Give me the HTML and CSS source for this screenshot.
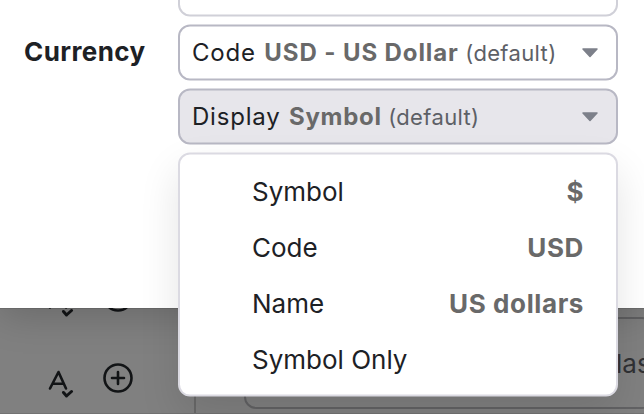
FILE: index.html
```
<!DOCTYPE html>
<html lang="en">
<head>
<meta charset="utf-8">
<title>Currency</title>
<link rel="stylesheet" href="styles.css">
</head>
<body>
<div class="page">
  <div class="tools">
    <svg class="spell" viewBox="0 0 26 28"><path d="M2 18.500L10.500 2L18 18.500M5 13.800H15"/><path class="check" d="M15.500 22.500L18.500 26L23.500 21.500"/></svg>
    <svg class="plus" viewBox="0 0 30 30"><circle cx="15" cy="15" r="13.500"/><path d="M15 9V21M9 15H21"/></svg>
  </div>
  <div class="tools">
    <svg class="spell" viewBox="0 0 26 28"><path d="M2 18.500L10.500 2L18 18.500M5 13.800H15"/><path class="check" d="M15.500 22.500L18.500 26L23.500 21.500"/></svg>
    <svg class="plus" viewBox="0 0 30 30"><circle cx="15" cy="15" r="13.500"/><path d="M15 9V21M9 15H21"/></svg>
  </div>
  <div class="pane"><div class="field"><span>las</span></div></div>
</div>
<main class="dialog">
  <div class="label">Currency</div>
  <div class="controls">
    <div class="select previous"></div>
    <div class="select"><span>Code</span><b class="long">USD - US Dollar</b><small>(default)</small><svg class="caret" viewBox="0 0 18 11"><path d="M2 1.500H16L9 9Z"/></svg></div>
    <div class="select active"><span>Display</span><b>Symbol</b><small>(default)</small><svg class="caret" viewBox="0 0 18 11"><path d="M2 1.500H16L9 9Z"/></svg></div>
  </div>
</main>
<div class="menu">
  <div class="item"><span>Symbol</span><b>$</b></div>
  <div class="item"><span>Code</span><b>USD</b></div>
  <div class="item"><span>Name</span><b>US dollars</b></div>
  <div class="item"><span>Symbol Only</span></div>
</div>
</body>
</html>
```
FILE: styles.css
```
* { box-sizing: border-box; }
body {
  margin: 0;
  width: 644px;
  height: 414px;
  overflow: hidden;
  position: relative;
  background: #808080;
  color: #1d2125;
  font: 26px/32px Inter, sans-serif;
}
.page {
  position: absolute;
  inset: 0;
  padding-top: 282px;
  overflow: hidden;
  border-bottom: 1px solid #727272;
}
.tools {
  display: flex;
  gap: 29px;
  height: 81px;
  padding-left: 48px;
}
.tools svg {
  fill: none;
  stroke: #121416;
  stroke-width: 2.600;
  stroke-linecap: round;
  stroke-linejoin: round;
}
.tools .check { stroke-width: 3; }
.spell { width: 26px; height: 28px; margin-top: 7px; }
.plus { width: 30px; height: 30px; }
.pane {
  position: absolute;
  left: 194px;
  top: 300px;
  width: 460px;
  height: 114px;
  padding: 17px 0 0 48px;
  border-left: 2px solid #696969;
}
.field {
  height: 92px;
  border: 2px solid #626264;
  border-radius: 12px;
  display: flex;
  align-items: center;
  padding: 2px 0 0 370px;
  color: #303134;
}
.dialog {
  position: absolute;
  left: 0;
  top: 0;
  width: 644px;
  height: 308px;
  background: #fff;
  box-shadow: 0 0 0 1px rgba(0,0,0,.1), 0 8px 36px rgba(0,0,0,.18);
  display: flex;
}
.label {
  width: 178px;
  padding: 36px 0 0 24px;
  font-weight: 700;
  letter-spacing: .4px;
}
.controls {
  width: 440px;
  margin-top: -40px;
  display: flex;
  flex-direction: column;
  gap: 8px;
  transform: translateY(.5px);
}
.select {
  height: 56px;
  border: 2px solid #b8b8c4;
  border-radius: 12px;
  display: flex;
  align-items: baseline;
  padding: 10px 17px 0 12px;
  white-space: nowrap;
  font-size: 24px;
  letter-spacing: .8px;
}
.select.previous { border-color: #d0d0d8; }
.select.active { background: #e7e6eb; }
b { color: #696969; font-weight: 700; }
.select b { margin-left: 8.500px; letter-spacing: .7px; }
.select .long { letter-spacing: .9px; }
small { margin-left: 6.500px; font-size: 22px; letter-spacing: .35px; color: #5d6066; }
.caret {
  width: 18px;
  height: 11px;
  margin-left: auto;
  align-self: flex-start;
  margin-top: 11px;
  fill: #7d808a;
  stroke: #7d808a;
  stroke-width: 1.500;
  stroke-linejoin: round;
}
.menu {
  position: absolute;
  left: 178px;
  top: 152px;
  width: 440px;
  height: 244px;
  padding: 9px 32px 0 72px;
  border: 2px solid #dbdae2;
  border-radius: 12px;
  background: #fff;
  box-shadow: 0 18px 40px rgba(0,0,0,.11);
  transform: translateY(.6px);
}
.item {
  height: 56px;
  display: flex;
  justify-content: space-between;
  align-items: center;
}
.item b { letter-spacing: .6px; }
```
